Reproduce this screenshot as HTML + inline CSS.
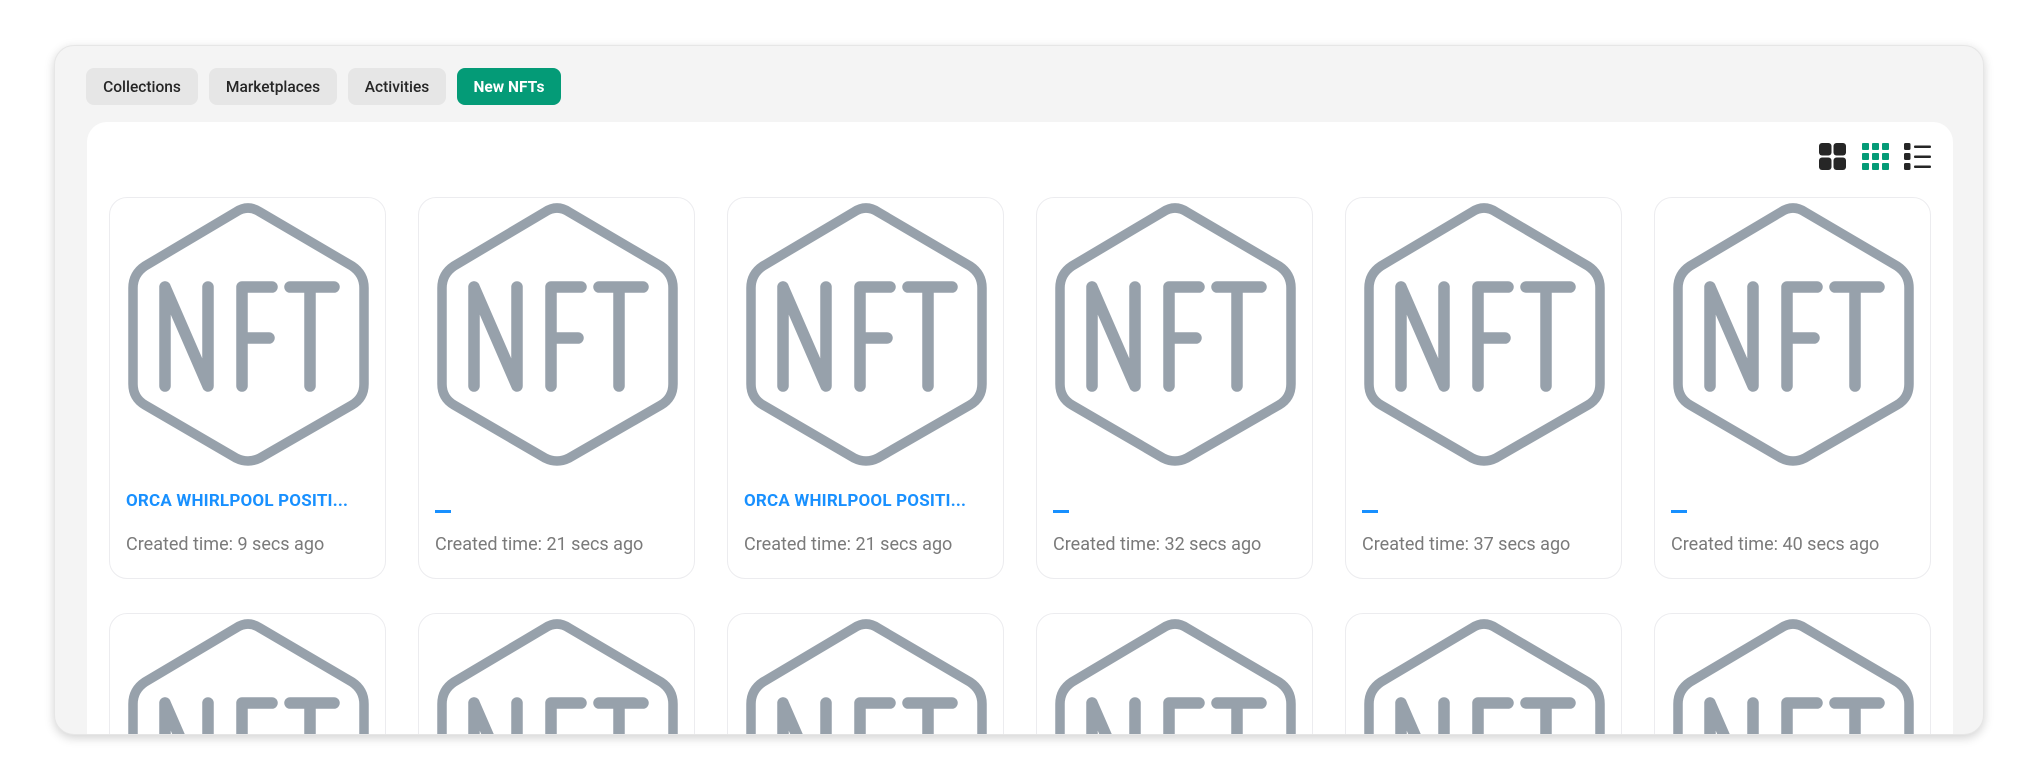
<!DOCTYPE html>
<html><head><meta charset="utf-8"><style>
*{box-sizing:border-box;margin:0;padding:0}
html,body{width:2036px;height:780px;overflow:hidden}
body{background:#fff;position:relative;font-family:"Roboto","Liberation Sans",sans-serif}
.frame{position:absolute;left:54px;top:45px;width:1930px;height:690px;background:#f4f4f4;border-radius:20px;overflow:hidden;box-shadow:0 3px 10px rgba(0,0,0,.18);border:1px solid #e6e6e6}
.tab{position:absolute;top:22px;height:37px;border-radius:8px;background:#e6e6e6;color:#262626;font-size:15.5px;font-weight:500;display:flex;align-items:center;justify-content:center}
.tab.on{background:#049b77;color:#fff;font-weight:700}
.panel{position:absolute;left:32px;top:76px;width:1866px;height:620px;background:#fff;border-radius:20px 20px 0 0}
.card{position:absolute;width:277px;height:382px;border:1.5px solid #ececef;border-radius:18px;background:#fff}
.card svg{position:absolute;left:0;top:0}
.title{position:absolute;left:16px;top:293px;color:#1890ff;font-weight:700;font-size:17px;letter-spacing:.2px}
.dash{position:absolute;left:16px;top:312px;width:16px;height:3px;background:#1890ff}
.time{position:absolute;left:16px;top:336px;color:#7a7a7a;font-size:18px}
</style></head><body>
<div class="frame">
<div class="tab" style="left:31px;width:112px">Collections</div>
<div class="tab" style="left:154px;width:128px">Marketplaces</div>
<div class="tab" style="left:293px;width:98px">Activities</div>
<div class="tab on" style="left:402px;width:104px">New NFTs</div>
<div class="panel">
<svg style="position:absolute;left:1732px;top:21px" width="120" height="28">
<g fill="#262626"><rect x="0" y="0" width="12.5" height="12.5" rx="3"/><rect x="14.5" y="0" width="12.5" height="12.5" rx="3"/><rect x="0" y="14.5" width="12.5" height="12.5" rx="3"/><rect x="14.5" y="14.5" width="12.5" height="12.5" rx="3"/></g>
<g fill="#049b77"><rect x="43" y="0" width="7" height="7" rx="1"/><rect x="53" y="0" width="7" height="7" rx="1"/><rect x="63" y="0" width="7" height="7" rx="1"/><rect x="43" y="10" width="7" height="7" rx="1"/><rect x="53" y="10" width="7" height="7" rx="1"/><rect x="63" y="10" width="7" height="7" rx="1"/><rect x="43" y="20" width="7" height="7" rx="1"/><rect x="53" y="20" width="7" height="7" rx="1"/><rect x="63" y="20" width="7" height="7" rx="1"/></g>
<g fill="#262626"><rect x="85" y="0" width="6.5" height="7" rx="1.5"/><rect x="85" y="10" width="6.5" height="7" rx="1.5"/><rect x="85" y="20" width="6.5" height="7" rx="1.5"/><rect x="95" y="2.5" width="17" height="2.5" rx="1"/><rect x="95" y="12.5" width="17" height="2.5" rx="1"/><rect x="95" y="22.5" width="17" height="2.5" rx="1"/></g>
</svg>
</div>
<div id="cards"></div>
</div>
<script>
var hex='<svg width="277" height="275" viewBox="0 0 277 275"><g fill="none" stroke="#97a1ab" stroke-width="9.5" stroke-linejoin="round" stroke-linecap="round"><path d="M126 14 Q138 6 150 14 L242 68 Q254 76 254 90 L254 186 Q254 200 242 207 L150 260 Q138 266 126 260 L35 207 Q23 200 23 186 L23 90 Q23 76 35 68 Z"/></g><g fill="none" stroke="#97a1ab" stroke-width="11.5" stroke-linecap="round" stroke-linejoin="round"><path d="M55 89 L55 188 M55 89 L98 188 L98 89 M132 188 L132 89 L162 89 M132 140 L159 140 M180 89 L224 89 M200 89 L200 188"/></g></svg>';
var d=[["ORCA WHIRLPOOL POSITI...","9"],["","21"],["ORCA WHIRLPOOL POSITI...","21"],["","32"],["","37"],["","40"]];
var h='';
for(var r=0;r<2;r++)for(var i=0;i<6;i++){
var x=108+i*309-54, y=(r?612:196)-45;
h+='<div class="card" style="left:'+x+'px;top:'+y+'px">'+hex+
(d[i][0]?'<div class="title">'+d[i][0]+'</div>':'<div class="dash"></div>')+
'<div class="time">Created time: '+d[i][1]+' secs ago</div></div>';}
document.getElementById('cards').innerHTML=h;
</script>
</body></html>
